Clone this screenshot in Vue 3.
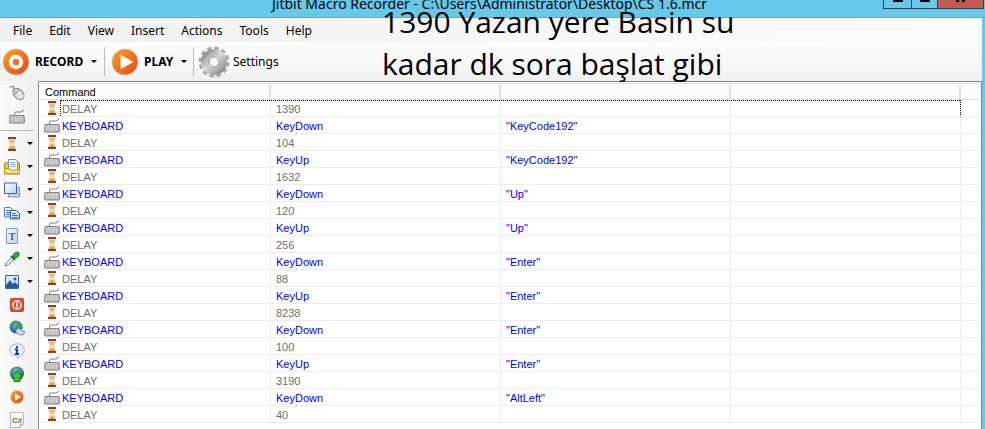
<template>
  <div class="window">
    <svg class="sprite" aria-hidden="true">
      <defs>
        <linearGradient id="orange" x1="0" y1="0" x2="1" y2="1">
          <stop offset="0" stop-color="#fba418" />
          <stop offset="1" stop-color="#e2461d" />
        </linearGradient>
        <linearGradient id="silver" x1="0" y1="0" x2="1" y2="1">
          <stop offset="0" stop-color="#8d8d8d" />
          <stop offset="0.45" stop-color="#dedede" />
          <stop offset="1" stop-color="#8a8a8a" />
        </linearGradient>
        <linearGradient id="paper" x1="0" y1="0" x2="1" y2="1">
          <stop offset="0" stop-color="#fff" />
          <stop offset="1" stop-color="#b9d2f2" />
        </linearGradient>
        <radialGradient id="earth" cx="0.4" cy="0.3" r="0.8">
          <stop offset="0" stop-color="#6fb3f0" />
          <stop offset="1" stop-color="#123f88" />
        </radialGradient>
      </defs>
      <symbol id="mouse" viewBox="0 0 16 16">
        <path d="M.5 2.500L5 1l-.5 3L7 4.500" fill="none" stroke="#777" />
        <ellipse cx="9.500" cy="9" rx="4.500" ry="6.500" transform="rotate(-45 9.500 9)" fill="#e2e2e2" stroke="#858585" />
        <path d="M4 9.500q4 0 5.500-5.500M7.500 8L5 5.500" fill="none" stroke="#858585" />
      </symbol>
      <symbol id="keyboard" viewBox="0 0 16 16">
        <path d="M5.500 7V5.500q0-1.500 2-1.500h4q3 0 3-2.500" fill="none" stroke="#777" />
        <path d="M1 7.500h14l.5 6.500q0 1-1 1h-13q-1 0-1-1z" fill="#b4b4b4" stroke="#858585" />
        <path d="M2 9h12M1.500 11h13M2 13h2M5 13h6M12 13h2" stroke="#f4f4f4" stroke-dasharray="1.200 .8" />
      </symbol>
      <symbol id="hourglass" viewBox="0 0 16 16">
        <path d="M5 3h6q0 3-2 5 2 2 2 5H5q0-3 2-5-2-2-2-5z" fill="#fdf3dc" stroke="#b5aaa5" stroke-width=".8" />
        <path d="M5.800 4.500h4.400L8 7.500zM5.300 13q.5-2 2.700-3.500 2.200 1.500 2.700 3.500z" fill="#f09a22" />
        <path d="M4 2h8M4 14h8" stroke="#8a4026" stroke-width="1.800" />
      </symbol>
      <symbol id="folder" viewBox="0 0 16 16">
        <path d="M.5 5q0-1.500 1.500-1.500h12q1.500 0 1.500 1.500v9q0 1-1 1h-13q-1 0-1-1z" fill="#f4c63f" stroke="#b98718" />
        <path d="M4.500.5h7l2 2V12h-9z" fill="#eef6ff" stroke="#6b91c4" />
        <path d="M6 3.500h5M6 5.500h6M6 7.500h6" stroke="#90b7e5" />
        <path d="M.5 14.500V9.500h5l1 1.500h9v3.500z" fill="#ffe070" stroke="#c39420" />
      </symbol>
      <symbol id="windows" viewBox="0 0 16 16">
        <path d="M4.500 5.500h11v9.500h-11z" fill="#c9d3e6" stroke="#8795b5" />
        <path d="M.5 1h12v10.500H.5z" fill="url(#paper)" stroke="#435f9d" />
      </symbol>
      <symbol id="copy" viewBox="0 0 16 16">
        <path d="M.5 2.500h6l3 3v6.500h-9z" fill="url(#paper)" stroke="#4b83c8" />
        <path d="M2 5.500h4M2 7.500h5M2 9.500h5" stroke="#4b83c8" />
        <path d="M6.500 5.500h6l3 3V14h-9z" fill="url(#paper)" stroke="#235fae" />
        <path d="M8 8.500h4M8 10.500h6M8 12.500h6" stroke="#2f72c6" />
      </symbol>
      <symbol id="letter" viewBox="0 0 16 16">
        <path d="M2.500.5h11v15h-11z" fill="url(#paper)" stroke="#6f9bd3" />
        <text x="8" y="11.500" text-anchor="middle" font-family="Liberation Serif, serif" font-size="10" font-weight="bold" fill="#555c68">T</text>
      </symbol>
      <symbol id="dropper" viewBox="0 0 16 16">
        <path d="M1 15l1-3 6-6 2 2-6 6z" fill="#e5eee9" stroke="#789083" />
        <path d="M7 5l4 4" stroke="#256b22" stroke-width="2" />
        <path d="M9 5q1-4 4-4 3 0 2 3-1 3-4 3z" fill="#2fae27" stroke="#167a18" />
      </symbol>
      <symbol id="picture" viewBox="0 0 16 16">
        <path d="M1.500 1.500h13v13h-13z" fill="#d2e6fc" stroke="#3c66a5" />
        <path d="M2 11l4-5 3 4 2-2 3 3v3H2z" fill="#245ba8" />
        <circle cx="11" cy="5" r="1.500" fill="#285aa5" />
      </symbol>
      <symbol id="power" viewBox="0 0 16 16">
        <rect x="1.500" y="1.500" width="13" height="13" rx="1" fill="#e24d2d" stroke="#c8452a" />
        <circle cx="8" cy="8" r="4" fill="none" stroke="#fff" stroke-width="1.500" />
        <path d="M8 5.500v5" stroke="#fff" stroke-width="1.500" />
      </symbol>
      <symbol id="globe" viewBox="0 0 16 16">
        <circle cx="7" cy="7" r="6.500" fill="url(#earth)" />
        <path d="M2 3q3-3 6-2L6 4 4 6 1 7zM8 4l4-1q2 3 1 6l-3-1-3-1z" fill="#3aa33b" />
        <path d="M7 10l3-2 3 3 3 1-2 3-4-.5-3-2z" fill="#cbdaf0" stroke="#5c7eae" stroke-width=".8" />
      </symbol>
      <symbol id="info" viewBox="0 0 16 16">
        <path d="M8 .8q7 0 7.200 6 0 5-4.200 6l-2 2.700-1-2.500Q.8 12.500.8 7 1 1 8 .8z" fill="#e7f1fd" stroke="#9bb2d0" />
        <path d="M8 3v2M6 6.500h2V11M6 11h4" fill="none" stroke="#143b96" stroke-width="1.900" />
      </symbol>
      <symbol id="upload" viewBox="0 0 16 16">
        <circle cx="8" cy="7.500" r="7" fill="url(#earth)" />
        <path d="M1 6q2-5 6-5L5 4 4 7zM9 2l4 1 2 4-4-1z" fill="#49a34d" />
        <path d="M8 5l6 6h-3v4.500H5V11H2z" fill="#3cc32d" stroke="#107b17" />
      </symbol>
      <symbol id="play" viewBox="0 0 16 16">
        <circle cx="8" cy="8" r="6.700" fill="url(#orange)" stroke="#dedede" stroke-width=".6" />
        <path d="M6 4.500l6 3.500-6 3.500z" fill="#fff" />
      </symbol>
      <symbol id="record" viewBox="0 0 16 16">
        <circle cx="8" cy="8" r="7.500" fill="url(#orange)" stroke="#ccc" stroke-width=".5" />
        <circle cx="8" cy="8" r="3" fill="none" stroke="#fff" stroke-width="2.200" />
      </symbol>
      <symbol id="bigplay" viewBox="0 0 16 16">
        <circle cx="8" cy="8" r="7.500" fill="url(#orange)" stroke="#ccc" stroke-width=".5" />
        <path d="M5.500 3.900L12.800 8l-7.300 4.100z" fill="#fff" />
      </symbol>
      <symbol id="csharp" viewBox="0 0 16 16">
        <path d="M1.500.5h13V12L11 15.500H1.500z" fill="#fafafa" stroke="#b5b5b5" />
        <path d="M14.500 12H11v3.500" fill="#ddd" stroke="#aaa" />
        <text x="8" y="11" text-anchor="middle" font-family="Liberation Sans, sans-serif" font-size="8" font-weight="bold" fill="#7d6436">C#</text>
      </symbol>
      <symbol id="gear" viewBox="0 0 32 32">
        <circle cx="16" cy="16" r="14" fill="none" stroke="#a9a9a9" stroke-width="3" stroke-dasharray="4.330 3" />
        <circle cx="16" cy="16" r="9" fill="none" stroke="url(#silver)" stroke-width="8" />
        <circle cx="16" cy="16" r="8" fill="none" stroke="#bcbcbc" />
        <circle cx="16" cy="16" r="5" fill="#f7f7f7" stroke="#999" />
      </symbol>
      <symbol id="app" viewBox="0 0 16 16">
        <circle cx="8" cy="7" r="5" fill="#c9dce5" stroke="#4c7389" stroke-width="2" stroke-dasharray="2 1" />
        <circle cx="8" cy="7" r="2" fill="#3b5c70" />
        <path d="M5 13h6" stroke="#587889" stroke-width="2" />
      </symbol>
    </svg>

    <header class="titlebar">
      <svg class="app-icon"><use href="#app" /></svg>
      <h1>Jitbit Macro Recorder - C:\Users\Administrator\Desktop\CS 1.6.mcr</h1>
      <div class="caption-buttons">
        <button class="minimize" aria-label="Minimize"><i></i></button>
        <button class="maximize" aria-label="Maximize"><i></i></button>
        <button class="close" aria-label="Close">
          <svg viewBox="0 0 10 8"><path d="M1 0l7 7M8 0L1 7M0 7h3M6 7h3" /></svg>
        </button>
      </div>
    </header>

    <div class="client">
      <nav class="menu">
        <button v-for="item in menu" :key="item">{{ item }}</button>
      </nav>

      <div class="toolbar">
        <button class="record"><svg><use href="#record" /></svg><b>RECORD</b><i class="caret"></i></button>
        <span class="divider"></span>
        <button class="run"><svg><use href="#bigplay" /></svg><b>PLAY</b><i class="caret"></i></button>
        <span class="divider"></span>
        <button class="settings"><svg><use href="#gear" /></svg>Settings</button>
      </div>

      <div class="workspace">
        <aside class="sidebar">
          <template v-for="tool in tools" :key="tool.icon">
            <button :class="{ dropdown: tool.dropdown }" :aria-label="tool.icon">
              <svg><use :href="'#' + tool.icon" /></svg>
              <i v-if="tool.dropdown" class="caret"></i>
            </button>
            <hr v-if="tool.icon === 'keyboard'">
          </template>
        </aside>

        <main class="list">
          <table>
            <colgroup>
              <col class="first">
              <col class="wide">
              <col class="wide">
              <col class="wide">
              <col>
            </colgroup>
            <thead>
              <tr>
                <th>Command</th>
                <th></th>
                <th></th>
                <th></th>
                <th></th>
              </tr>
            </thead>
            <tbody>
              <tr v-for="(row, i) in rows" :key="i" :class="[row.type, { focused: i === 0 }]">
                <td>
                  <div class="command">
                    <svg><use :href="row.type === 'delay' ? '#hourglass' : '#keyboard'" /></svg>
                    <span>{{ row.type.toUpperCase() }}</span>
                  </div>
                </td>
                <td>{{ row.value }}</td>
                <td>{{ row.key }}</td>
                <td></td>
                <td></td>
              </tr>
            </tbody>
          </table>
        </main>
      </div>
    </div>

    <p class="note">1390 Yazan yere Basin su<br>kadar dk sora başlat gibi</p>
  </div>
</template>

<script setup>
const menu = ['File', 'Edit', 'View', 'Insert', 'Actions', 'Tools', 'Help']

const tools = [
  { icon: 'mouse' },
  { icon: 'keyboard' },
  { icon: 'hourglass', dropdown: true },
  { icon: 'folder', dropdown: true },
  { icon: 'windows', dropdown: true },
  { icon: 'copy', dropdown: true },
  { icon: 'letter', dropdown: true },
  { icon: 'dropper', dropdown: true },
  { icon: 'picture', dropdown: true },
  { icon: 'power' },
  { icon: 'globe' },
  { icon: 'info' },
  { icon: 'upload' },
  { icon: 'play' },
  { icon: 'csharp' }
]

const delay = (value) => ({ type: 'delay', value })
const keyboard = (value, key) => ({ type: 'keyboard', value, key: `"${key}"` })

const rows = [
  delay(1390),
  keyboard('KeyDown', 'KeyCode192'),
  delay(104),
  keyboard('KeyUp', 'KeyCode192'),
  delay(1632),
  keyboard('KeyDown', 'Up'),
  delay(120),
  keyboard('KeyUp', 'Up'),
  delay(256),
  keyboard('KeyDown', 'Enter'),
  delay(88),
  keyboard('KeyUp', 'Enter'),
  delay(8238),
  keyboard('KeyDown', 'Enter'),
  delay(100),
  keyboard('KeyUp', 'Enter'),
  delay(3190),
  keyboard('KeyDown', 'AltLeft'),
  delay(40)
]
</script>

<style>
body {
  margin: 0;
}
</style>

<style scoped>
.window {
  position: relative;
  display: flex;
  flex-direction: column;
  height: 100vh;
  overflow: hidden;
  background: #66c9ea;
  color: #000;
  font-family: "Noto Sans", "Open Sans", sans-serif;
  font-size: 12px;
}

.sprite {
  position: absolute;
  width: 0;
  height: 0;
}

button {
  display: flex;
  align-items: center;
  padding: 0;
  border: none;
  background: none;
  color: inherit;
  font: inherit;
}

svg {
  display: block;
  flex: none;
  width: 16px;
  height: 16px;
}

.titlebar {
  position: relative;
  display: flex;
  flex: none;
  align-items: flex-end;
  justify-content: center;
  box-sizing: border-box;
  height: 18px;
  padding: 0 6px 4px 0;
  border-bottom: 1px solid #5fa9c5;
  overflow: hidden;
}

.titlebar h1 {
  margin: 0;
  font-size: 14px;
  font-weight: 400;
  line-height: 18px;
  white-space: nowrap;
}

.app-icon {
  position: absolute;
  left: 0;
  bottom: 6px;
}

.caption-buttons {
  position: absolute;
  top: 0;
  right: 1px;
  display: flex;
  height: 9px;
}

.caption-buttons button {
  box-sizing: border-box;
  width: 28px;
  align-items: flex-start;
  justify-content: center;
  border: 1px solid #29444e;
  border-width: 0 0 1px 1px;
}

.caption-buttons .maximize {
  width: 26px;
}

.caption-buttons .close {
  width: 47px;
  border-right-width: 1px;
  background: #c35b50;
}

.caption-buttons i {
  width: 10px;
  height: 2px;
  background: #000;
}

.caption-buttons svg {
  width: 10px;
  height: 8px;
  margin-top: -6px;
  fill: none;
  stroke: #000;
  stroke-width: 2;
}

.client {
  display: flex;
  flex: 1;
  flex-direction: column;
  min-height: 0;
  margin-right: 3px;
  background: #f4f4f4;
}

.menu {
  display: flex;
  flex: none;
  gap: 17px;
  height: 24px;
  padding-left: 13px;
  background: linear-gradient(90deg, #f0f0f0, #fcfcfc);
}

.toolbar {
  display: flex;
  flex: none;
  align-items: center;
  height: 39px;
  background: linear-gradient(#fdfdfd, #f7f7f7 60%, #efefef);
}

.toolbar svg {
  width: 28px;
  height: 28px;
  margin-right: 5px;
}

.toolbar .record {
  width: 102px;
  padding-left: 2px;
}

.toolbar .run {
  width: 82px;
  padding-left: 6px;
}

.toolbar .record,
.toolbar .run {
  box-sizing: content-box;
}

.toolbar .settings {
  padding-left: 4px;
}

.toolbar .settings svg {
  width: 32px;
  height: 32px;
  margin-right: 3px;
}

.toolbar .caret {
  margin-left: 8px;
}

.divider {
  width: 1px;
  height: 29px;
  background: #bdbdbd;
}

.caret {
  border: 3px solid transparent;
  border-top-color: #000;
  border-bottom-width: 0;
}

.workspace {
  display: flex;
  flex: 1;
  min-height: 0;
}

.sidebar {
  flex: none;
  width: 38px;
  background: linear-gradient(90deg, #fafafa, #efefef);
}

.sidebar button {
  width: 100%;
  height: 23px;
  padding-left: 9px;
}

.sidebar .dropdown {
  gap: 7px;
  padding-left: 4px;
}

.sidebar hr {
  width: 34px;
  height: 1px;
  margin: 3px 0 1px;
  border: none;
  background: #bdbdbd;
}

.list {
  flex: 1;
  min-width: 0;
  padding: 1px;
  border: 1px solid #828790;
  border-bottom: none;
  background: #fff;
  font-family: "Liberation Sans", Arial, sans-serif;
  font-size: 11px;
}

table {
  width: 100%;
  table-layout: fixed;
  border-spacing: 0;
}

.first {
  width: 231px;
}

.wide {
  width: 230px;
}

th,
td {
  box-sizing: border-box;
  height: 17px;
  padding: 2px 5px 0;
  border-right: 1px solid #ededed;
  border-bottom: 1px solid #ededed;
  line-height: 14px;
  text-align: left;
  white-space: nowrap;
}

th {
  padding-top: 1px;
  border-top: 1px solid #e0e0e0;
  border-right: 2px solid #e0e0e0;
  border-bottom-color: #e0e0e0;
  background: #fcfcfc;
  font-weight: 400;
}

th:last-child,
td:last-child {
  border-right: none;
}

td:first-child {
  padding: 0 0 0 4px;
}

.command {
  display: flex;
  height: 16px;
}

.command span {
  box-sizing: border-box;
  flex: 1;
  padding: 2px 0 0 2px;
}

.delay {
  color: #6d6d6d;
}

.keyboard {
  color: #0000f0;
}

.focused .command span,
.focused td:not(:first-child):not(:last-child) {
  background: repeating-linear-gradient(90deg, #000 0 1px, transparent 1px 2px) top / 100% 1px no-repeat;
}

.focused .command span {
  border-left: 1px dotted #000;
  padding-left: 1px;
}

.focused td:nth-child(4) {
  border-right: 1px dotted #000;
}

.note {
  position: absolute;
  top: 1px;
  left: 382px;
  margin: 0;
  font-family: "Open Sans", "Noto Sans", sans-serif;
  font-size: 30px;
  line-height: 42px;
  white-space: nowrap;
}
</style>
